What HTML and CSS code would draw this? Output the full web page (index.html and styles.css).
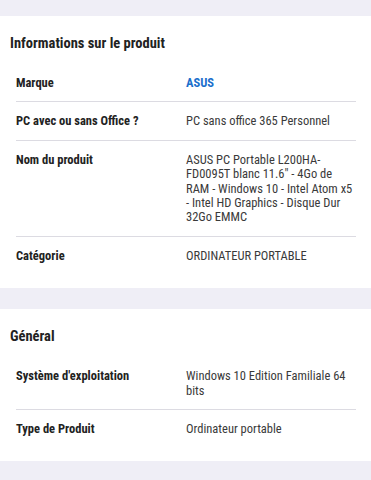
FILE: index.html
```html
<!DOCTYPE html>
<html>
<head>
  <title>Fiche produit</title>
  <link rel="stylesheet" href="styles.css">
</head>
<body>
  <div class="page">
    <section class="card">
      <h2>Informations sur le produit</h2>
      <div class="spec-list">
        <div class="spec-row">
          <div class="spec-label">Marque</div>
          <div class="spec-value brand">ASUS</div>
        </div>
        <div class="spec-row">
          <div class="spec-label">PC avec ou sans Office ?</div>
          <div class="spec-value">PC sans office 365 Personnel</div>
        </div>
        <div class="spec-row">
          <div class="spec-label">Nom du produit</div>
          <div class="spec-value">ASUS PC Portable L200HA-FD0095T blanc 11.6" - 4Go de RAM - Windows 10 - Intel Atom x5 - Intel HD Graphics - Disque Dur 32Go EMMC</div>
        </div>
        <div class="spec-row">
          <div class="spec-label">Catégorie</div>
          <div class="spec-value">ORDINATEUR PORTABLE</div>
        </div>
      </div>
    </section>

    <section class="card">
      <h2>Général</h2>
      <div class="spec-list">
        <div class="spec-row">
          <div class="spec-label">Système d'exploitation</div>
          <div class="spec-value">Windows 10 Edition Familiale 64 bits</div>
        </div>
        <div class="spec-row">
          <div class="spec-label">Type de Produit</div>
          <div class="spec-value">Ordinateur portable</div>
        </div>
      </div>
    </section>
  </div>
</body>
</html>
```

FILE: styles.css
```css
:root {
  --page-bg: #efeef6;
  --card-bg: #ffffff;
  --text: #222222;
  --text-value: #3a3a3a;
  --divider: #dcdbe2;
  --brand: #1b6fcc;
}

body {
  margin: 0;
  background: var(--page-bg);
  font-family: "Roboto Condensed", "Liberation Sans Narrow", Roboto, sans-serif;
  color: var(--text);
}

.page {
  padding-top: 16px;
  display: flex;
  flex-direction: column;
  gap: 21px;
}

.card {
  background: var(--card-bg);
  padding: 19px 15px 14px 10px;
}

h2 {
  margin: 0 0 12px;
  font-size: 14.5px;
  font-weight: 700;
  line-height: 17px;
}

.spec-list {
  padding-left: 6px;
}

.spec-row {
  display: flex;
  padding: 12px 0 11px;
  border-bottom: 1.5px solid var(--divider);
  font-size: 12.5px;
  line-height: 14.4px;
}

.spec-row:last-child {
  border-bottom: none;
}

.spec-label {
  width: 170px;
  flex-shrink: 0;
  font-weight: 700;
}

.spec-value {
  flex: 1;
  color: var(--text-value);
}

.brand {
  color: var(--brand);
  font-weight: 700;
}
```
